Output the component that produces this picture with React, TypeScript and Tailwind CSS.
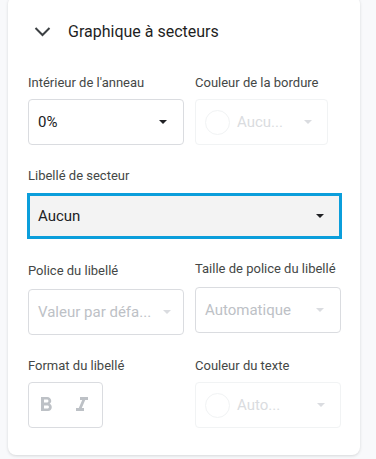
import React from 'react';
import { MdFormatBold, MdFormatItalic } from 'react-icons/md';

const Caret: React.FC<{ light?: boolean }> = ({ light }) => (
    <svg width="8" height="4" viewBox="0 0 8 4" className="shrink-0">
        <polygon points="0,0 8,0 4,4" fill={light ? '#dadce0' : '#202124'} />
    </svg>
);

const Label: React.FC<{ children: React.ReactNode; className?: string }> = ({ children, className }) => (
    <div className={`h-4 text-[13px] leading-4 text-[#444746] whitespace-nowrap ${className ?? ''}`}>
        {children}
    </div>
);

const ColorSelect: React.FC<{ value: string; width: string }> = ({ value, width }) => (
    <div className={`flex items-center h-[46px] ${width} border border-[#f1f3f4] rounded pl-[9px] pr-[15px]`}>
        <div className="w-[25px] h-[25px] rounded-full border border-[#f1f3f4] shrink-0" />
        <span className="ml-[7px] text-[15px] text-[#dadce0]">{value}</span>
        <div className="ml-auto">
            <Caret light />
        </div>
    </div>
);

const App: React.FC = () => {
    return (
        <div
            className="w-[376px] h-[459px] overflow-hidden bg-[#f8f9fb] pl-2"
            style={{ fontFamily: 'Roboto, "Noto Sans", sans-serif' }}
        >
            <div className="-mt-1 w-[352px] bg-white rounded-lg shadow-[0_1px_3px_rgba(60,64,67,0.18)] pt-6 pb-[27px] pl-5">
                {/* header */}
                <div className="flex items-center h-6">
                    <svg width="18" height="12" viewBox="0 0 18 12" className="ml-[6px]">
                        <polyline
                            points="1.5,2 8.5,9 15.5,2"
                            fill="none"
                            stroke="#3c4043"
                            strokeWidth="2"
                        />
                    </svg>
                    <span className="ml-[16px] text-[16px] text-[#1f1f1f]">Graphique à secteurs</span>
                </div>

                {/* ring + border colour */}
                <div className="mt-[31px] flex gap-[11px]">
                    <div className="flex flex-col w-[156px]">
                        <Label className="mb-2">Intérieur de l'anneau</Label>
                        <div className="flex items-center h-[46px] border border-[#dadce0] rounded pl-[9px] pr-[16px]">
                            <span className="text-[15px] text-[#202124]">0%</span>
                            <div className="ml-auto">
                                <Caret />
                            </div>
                        </div>
                    </div>
                    <div className="flex flex-col">
                        <Label className="mb-2">Couleur de la bordure</Label>
                        <ColorSelect value="Aucu..." width="w-[133px]" />
                    </div>
                </div>

                {/* slice label */}
                <div className="mt-[23px] flex flex-col">
                    <Label className="mb-[9px]">Libellé de secteur</Label>
                    <div className="-ml-px flex items-center w-[315px] h-[46px] border-[3px] border-[#0b9edb] bg-[#f3f3f3] pl-2 pr-[15px]">
                        <span className="text-[15px] text-[#202124]">Aucun</span>
                        <div className="ml-auto">
                            <Caret />
                        </div>
                    </div>
                </div>

                {/* font + size */}
                <div className="mt-[22px] flex gap-[11px] items-start">
                    <div className="flex flex-col w-[156px] pt-[2px]">
                        <Label className="mb-[10px]">Police du libellé</Label>
                        <div className="flex items-center h-[46px] border border-[#dadce0] rounded pl-[9px] pr-[12px]">
                            <span className="text-[15px] text-[#bdc1c6] whitespace-nowrap">Valeur par défa...</span>
                            <div className="ml-auto">
                                <Caret light />
                            </div>
                        </div>
                    </div>
                    <div className="flex flex-col">
                        <Label className="mb-[10px]">Taille de police du libellé</Label>
                        <div className="flex items-center w-[146px] h-[46px] border border-[#dadce0] rounded pl-[9px] pr-[16px]">
                            <span className="text-[15px] text-[#bdc1c6]">Automatique</span>
                            <div className="ml-auto">
                                <Caret light />
                            </div>
                        </div>
                    </div>
                </div>

                {/* format + text colour */}
                <div className="mt-[23px] flex gap-[11px]">
                    <div className="flex flex-col w-[156px]">
                        <Label className="mb-2">Format du libellé</Label>
                        <div className="flex items-center w-[75px] h-[46px] border border-[#dadce0] rounded pl-[5px] gap-3 text-[#bdc1c6]">
                            <MdFormatBold size={24} />
                            <MdFormatItalic size={24} />
                        </div>
                    </div>
                    <div className="flex flex-col">
                        <Label className="mb-2">Couleur du texte</Label>
                        <ColorSelect value="Auto..." width="w-[146px]" />
                    </div>
                </div>
            </div>
        </div>
    );
};

export default App;
